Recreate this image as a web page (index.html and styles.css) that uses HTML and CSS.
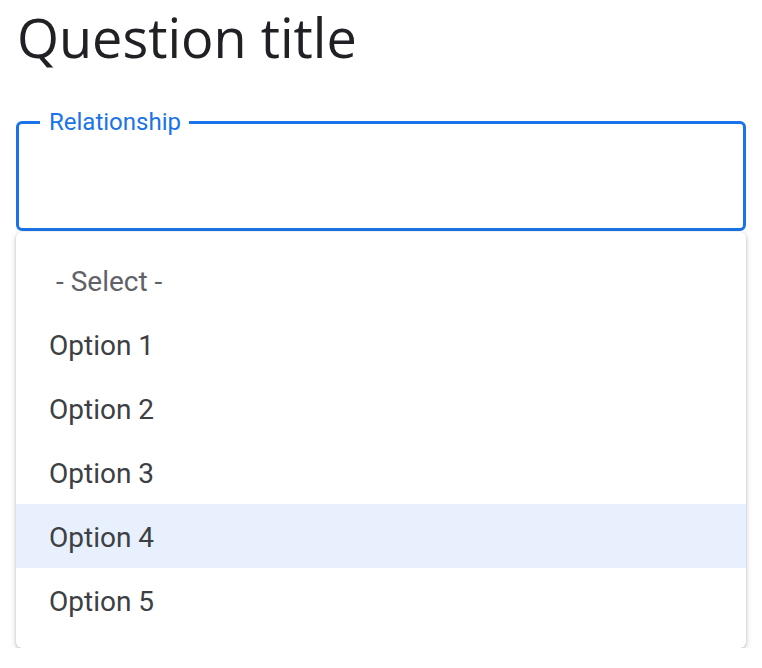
FILE: index.html
```html
<!DOCTYPE html>
<html lang="en">
<head>
<meta charset="utf-8">
<title>Question title</title>
<link rel="stylesheet" href="styles.css">
</head>
<body>
<main class="page">
  <h1 class="title">Question title</h1>
  <fieldset class="field">
    <legend class="field-label">Relationship</legend>
    <div class="field-body"></div>
  </fieldset>
  <ul class="menu">
    <li class="menu-item placeholder">- Select -</li>
    <li class="menu-item">Option 1</li>
    <li class="menu-item">Option 2</li>
    <li class="menu-item">Option 3</li>
    <li class="menu-item active">Option 4</li>
    <li class="menu-item">Option 5</li>
  </ul>
</main>
</body>
</html>
```
FILE: styles.css
```css
html, body {
  margin: 0;
  padding: 0;
  background: #ffffff;
}
.page {
  padding: 0 16px;
  font-family: Roboto, "Liberation Sans", sans-serif;
}
.title {
  margin: 0 0 0 1px;
  font-family: "Open Sans", Roboto, sans-serif;
  font-weight: 400;
  font-size: 54px;
  line-height: 74px;
  color: #202124;
}
.field {
  margin: 36px 0 0 0;
  padding: 0 0 0 21px;
  border: 3px solid #1a73e8;
  border-radius: 6px;
  min-width: 0;
}
.field-label {
  padding: 0 8px 0 9px;
  font-size: 24px;
  line-height: 24px;
  color: #1a73e8;
}
.field-body {
  height: 94px;
}
.menu {
  list-style: none;
  margin: 1px 0 0 0;
  padding: 16px 0;
  border-radius: 6px;
  background: #ffffff;
  box-shadow: 0 1px 3px rgba(60, 64, 67, 0.3), 0 2px 6px 1px rgba(60, 64, 67, 0.12);
}
.menu-item {
  height: 61px;
  padding: 3px 0 0 33px;
  font-size: 28px;
  line-height: 61px;
  color: #3c4043;
}
.menu-item.placeholder {
  padding-left: 40px;
  color: #5f6368;
}
.menu-item.active {
  background: #e8f0fe;
}
```
